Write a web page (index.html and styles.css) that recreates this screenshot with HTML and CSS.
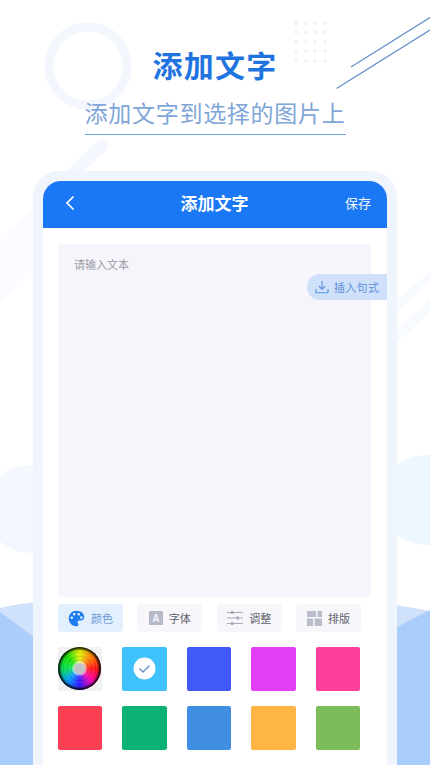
FILE: index.html
```html
<!DOCTYPE html>
<html lang="zh-CN">
<head>
<meta charset="utf-8">
<title>添加文字</title>
<link rel="stylesheet" href="styles.css">
</head>
<body>
<main class="page">
  <svg class="backdrop" width="430" height="765" viewBox="0 0 430 765" aria-hidden="true">
    <circle cx="88" cy="66" r="39" fill="none" stroke="#f3f7fd" stroke-width="9"/>
    <line x1="102" y1="146" x2="60" y2="185" stroke="#f4f8fe" stroke-width="12" stroke-linecap="round"/>
    <path d="M0 238 L45 196 V262 L0 304Z" fill="#fafcff"/>
    <path d="M397 300 L430 272 V282 L397 312Z" fill="#f7faff"/>
    <path d="M397 330 L430 300 V312 L397 342Z" fill="#f7faff"/>
    <g fill="#f0f4fa">
      <circle cx="296" cy="23" r="2"/><circle cx="305.500" cy="23" r="2"/><circle cx="315" cy="23" r="2"/><circle cx="325" cy="23" r="2"/>
      <circle cx="296" cy="32" r="2"/><circle cx="305.500" cy="32" r="2"/><circle cx="315" cy="32" r="2"/><circle cx="325" cy="32" r="2"/>
      <circle cx="296" cy="42" r="2"/><circle cx="305.500" cy="42" r="2"/><circle cx="315" cy="42" r="2"/><circle cx="325" cy="42" r="2"/>
      <circle cx="296" cy="51" r="2"/><circle cx="305.500" cy="51" r="2"/><circle cx="315" cy="51" r="2"/><circle cx="325" cy="51" r="2"/>
      <circle cx="296" cy="61" r="2"/><circle cx="305.500" cy="61" r="2"/><circle cx="315" cy="61" r="2"/><circle cx="325" cy="61" r="2"/>
    </g>
    <line x1="351" y1="67" x2="430" y2="17.500" stroke="#5f8cc6" stroke-width="1.200"/>
    <line x1="336.500" y1="88.500" x2="430" y2="30" stroke="#5f8cc6" stroke-width="1.200"/>
    <circle cx="30" cy="509" r="44" fill="#f3f8fe"/>
    <ellipse cx="428" cy="500" rx="50" ry="45" fill="#eff7fe"/>
    <path d="M0 608 Q20 603 50 601 V765 H0Z" fill="#cfe1fb"/>
    <path d="M0 612 L50 649 V765 H0Z" fill="#abcdfb"/>
    <path d="M380 602 L430 611 V765 H380Z" fill="#cfe1fb"/>
    <path d="M380 636 L430 610 V765 H380Z" fill="#abcdfb"/>
  </svg>

  <header class="hero">
    <h1 class="hero-title">添加文字</h1>
    <p class="hero-sub">添加文字到选择的图片上</p>
  </header>

  <section class="phone">
    <div class="screen">
      <div class="appbar">
        <svg class="back" width="10" height="16" viewBox="0 0 10 16" aria-hidden="true"><path d="M8.500 1.500 L2 8 L8.500 14.500" fill="none" stroke="#fff" stroke-width="1.700"/></svg>
        <span class="appbar-title">添加文字</span>
        <span class="appbar-save">保存</span>
      </div>
      <div class="body">
        <div class="editor">请输入文本</div>
        <div class="tabs">
          <div class="tab tab-active">
            <svg width="17" height="17" viewBox="0 0 18 18" aria-hidden="true"><path fill="#1f7cf0" fill-rule="evenodd" d="M9 .8C4.200.8.800 4.400.800 9s3.600 8.200 8 8.200c1.500 0 2.200-.9 2.200-1.900 0-1.300-.9-1.500-.9-2.600 0-1 .8-1.700 1.900-1.700h2.100c1.900 0 3.100-1.300 3.100-3.200C17.200 3.700 13.600.8 9 .8ZM4 9.600a1.400 1.400 0 1 1 0-2.800 1.400 1.400 0 0 1 0 2.800Zm2.600-3.700a1.400 1.400 0 1 1 0-2.800 1.400 1.400 0 0 1 0 2.800Zm4.800 0a1.400 1.400 0 1 1 0-2.800 1.400 1.400 0 0 1 0 2.800Zm2.800 3.500a1.400 1.400 0 1 1 0-2.800 1.400 1.400 0 0 1 0 2.800Z"/></svg>
            <span>颜色</span>
          </div>
          <div class="tab">
            <span class="glyph-a">A</span>
            <span>字体</span>
          </div>
          <div class="tab">
            <svg width="16" height="16" viewBox="0 0 16 16" aria-hidden="true"><g stroke="#a9adbb" stroke-width="1.200" fill="none"><path d="M0 2.500H16M0 8H16M0 13.500H16"/></g><g fill="#a9adbb"><rect x="4" y="1" width="2.500" height="3"/><rect x="9.500" y="6.500" width="2.500" height="3"/><rect x="4" y="12" width="2.500" height="3"/></g></svg>
            <span>调整</span>
          </div>
          <div class="tab">
            <svg width="15" height="15" viewBox="0 0 15 15" aria-hidden="true"><g fill="#b9bdc9"><rect width="9" height="6"/><rect x="10.500" width="4.500" height="6"/><rect y="7.500" width="6" height="7.500"/><rect x="7.500" y="7.500" width="7.500" height="7.500"/></g></svg>
            <span>排版</span>
          </div>
        </div>
        <div class="swatches">
          <div class="swatch swatch-wheel"><div class="wheel"><div class="wheel-rings"></div><div class="wheel-hub"></div></div></div>
          <div class="swatch c-sky">
            <svg width="23" height="23" viewBox="0 0 23 23" aria-hidden="true"><circle cx="11.500" cy="11.500" r="11" fill="#fff"/><path d="M6.500 11.500 L10 15 L16.500 8.500" fill="none" stroke="#6f93cf" stroke-width="1.500"/></svg>
          </div>
          <div class="swatch c-indigo"></div>
          <div class="swatch c-violet"></div>
          <div class="swatch c-pink"></div>
          <div class="swatch c-red"></div>
          <div class="swatch c-green"></div>
          <div class="swatch c-blue"></div>
          <div class="swatch c-amber"></div>
          <div class="swatch c-leaf"></div>
        </div>
      </div>
    </div>
  </section>

  <div class="insert-pill">
    <svg width="14" height="14" viewBox="0 0 14 14" aria-hidden="true"><path d="M7 1V9M3.800 6 L7 9.200 L10.200 6M1 9V12.700H13V9" fill="none" stroke="#5d93de" stroke-width="1.100"/></svg>
    <span>插入句式</span>
  </div>
</main>
</body>
</html>
```
FILE: styles.css
```css
* { box-sizing: border-box; }
html, body { margin: 0; padding: 0; }
body {
  width: 430px;
  height: 765px;
  overflow: hidden;
  background: #fff;
  font-family: "Noto Sans CJK SC", "Noto Sans", sans-serif;
}
.page {
  position: relative;
  width: 430px;
  height: 765px;
  overflow: hidden;
  padding-top: 42px;
}
.backdrop { position: absolute; left: 0; top: 0; }

.hero {
  position: relative;
  display: flex;
  flex-direction: column;
  align-items: center;
}
.hero-title {
  margin: 0;
  height: 44px;
  font-size: 30px;
  line-height: 44px;
  font-weight: 700;
  letter-spacing: 1.200px;
  color: #1f74e0;
}
.hero-sub {
  margin: 8px 0 0;
  width: 261px;
  height: 41px;
  padding-bottom: 4px;
  border-bottom: 1px solid #6fa3e0;
  font-size: 23px;
  line-height: 36px;
  letter-spacing: 0.700px;
  white-space: nowrap;
  text-align: center;
  color: #7ea6d8;
}

.phone {
  position: relative;
  width: 364px;
  height: 620px;
  margin: 36px 0 0 33px;
  padding: 10px 10px 0;
  border-radius: 26px 26px 0 0;
  background: #f0f4fd;
}
.screen {
  height: 100%;
  border-radius: 18px 18px 0 0;
  overflow: hidden;
  background: #fff;
}
.appbar {
  display: flex;
  align-items: center;
  justify-content: space-between;
  height: 47px;
  padding: 0 16px 4px 22px;
  background: #1a78f6;
  color: #fff;
}
.back { flex: none; }
.appbar-title {
  font-size: 17px;
  font-weight: 700;
  line-height: 24px;
  margin-left: 9px;
}
.appbar-save { font-size: 13px; line-height: 20px; color: #eef5ff; }

.body { padding: 16px 16px 0 15px; }
.editor {
  height: 353px;
  padding: 11px 16px;
  border-radius: 4px;
  background: #f6f5fc;
  font-size: 11px;
  line-height: 18px;
  color: #9a9aa4;
}
.tabs {
  display: flex;
  justify-content: space-between;
  width: 303px;
  margin-top: 7px;
}
.tab {
  display: flex;
  align-items: center;
  justify-content: center;
  gap: 6px;
  width: 65px;
  height: 28px;
  border-radius: 4px;
  background: #f6f6fb;
  font-size: 11px;
  color: #5f626c;
}
.tab-active { background: #e2effc; color: #6f9bd9; }
.glyph-a {
  display: flex;
  align-items: center;
  justify-content: center;
  width: 14px;
  height: 14px;
  background: #b6b9c8;
  color: #f4f4f9;
  font-family: "Liberation Sans", sans-serif;
  font-size: 10px;
  font-weight: 700;
}

.swatches {
  display: grid;
  grid-template-columns: repeat(5, 44.400px);
  column-gap: 20.200px;
  row-gap: 14.700px;
  margin: 14.500px 0 0 -0.300px;
}
.swatch {
  display: flex;
  align-items: center;
  justify-content: center;
  height: 44.400px;
  border-radius: 2px;
}
.swatch-wheel { background: #f1f1f4; }
.wheel {
  position: relative;
  width: 43px;
  height: 43px;
  border-radius: 50%;
  background: conic-gradient(from 90deg, #ff1010, #ff00b0, #3010ff, #00a0ff, #00e050, #18e000, #e0f000, #ff8000, #ff1010);
}
.wheel-rings {
  position: absolute;
  inset: 0;
  border-radius: 50%;
  background:
    repeating-radial-gradient(circle closest-side, rgba(0,0,0,.08) 0 1px, rgba(255,255,255,.04) 1px 4px),
    radial-gradient(circle closest-side, rgba(255,255,255,.7) 0 24%, rgba(255,255,255,.08) 40%, rgba(0,0,0,0) 82%, rgba(0,0,0,.55) 91%, #000 100%);
}
.wheel-hub {
  position: absolute;
  left: 50%;
  top: 50%;
  width: 11px;
  height: 11px;
  margin: -5.500px 0 0 -5.500px;
  border-radius: 50%;
  background: #c4c4c6;
}
.c-sky { background: #3fc1fb; }
.c-indigo { background: #4059f7; }
.c-violet { background: #e23ff5; }
.c-pink { background: #fb3f9a; }
.c-red { background: #fc3e54; }
.c-green { background: #0cb273; }
.c-blue { background: #418fe2; }
.c-amber { background: #feb545; }
.c-leaf { background: #7cbc5a; }

.insert-pill {
  position: absolute;
  left: 307px;
  top: 274px;
  display: flex;
  align-items: center;
  gap: 5px;
  width: 80px;
  height: 26px;
  padding-left: 8px;
  border-radius: 13px 0 0 13px;
  background: #cfe1fa;
  font-size: 11px;
  letter-spacing: 0.300px;
  color: #5d8fd6;
  white-space: nowrap;
}
```
